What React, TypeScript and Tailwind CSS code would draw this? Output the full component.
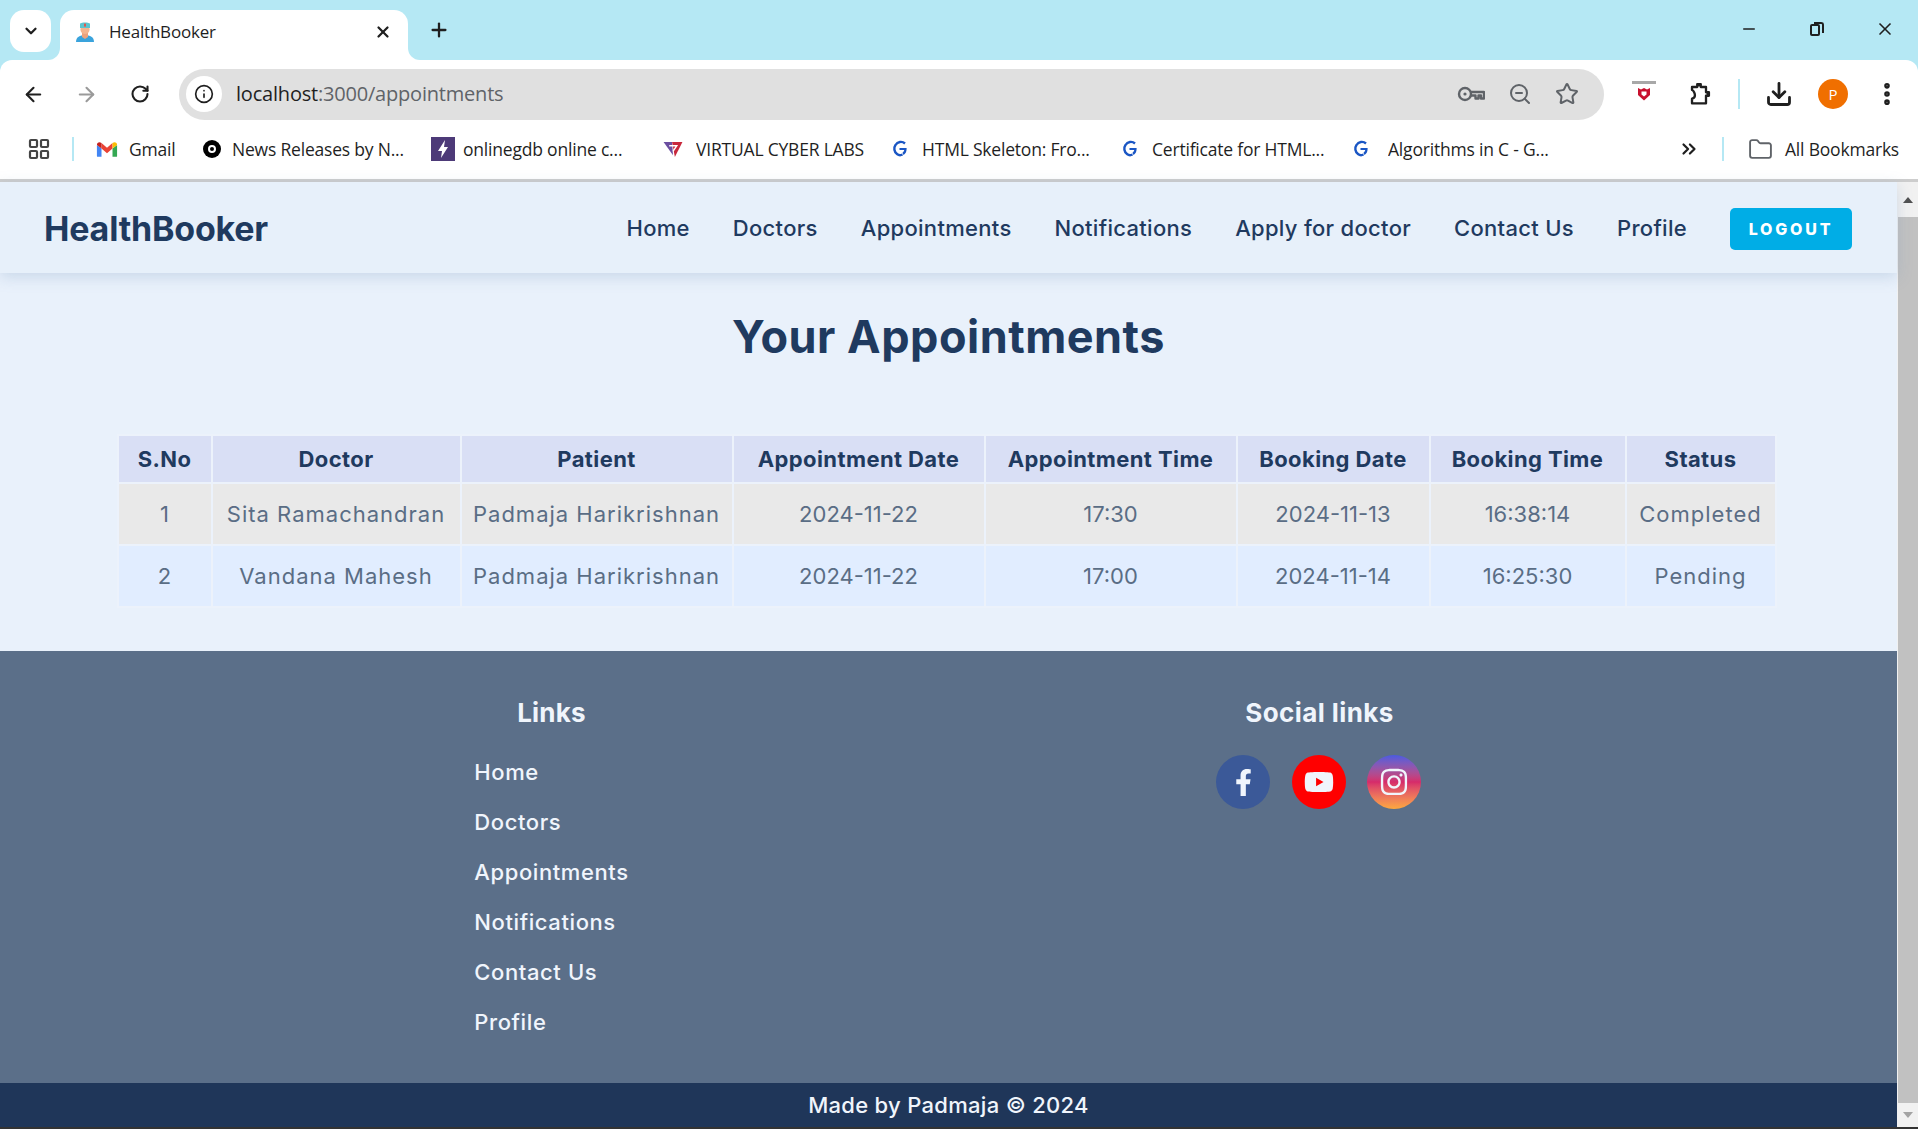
import { ArrowLeft, ArrowRight, ChevronDown, ChevronsRight, Download, EllipsisVertical, Folder, Info, LayoutGrid, Minus, Plus, RotateCw, Star, X, ZoomOut } from 'lucide-react';
import { FaFacebookF, FaInstagram, FaYoutube } from 'react-icons/fa';

const NAV = ['Home', 'Doctors', 'Appointments', 'Notifications', 'Apply for doctor', 'Contact Us', 'Profile'];
const FOOTER_LINKS = ['Home', 'Doctors', 'Appointments', 'Notifications', 'Contact Us', 'Profile'];
const COLS = [94, 249, 272, 252, 252, 193, 196, 150];
const HEAD = ['S.No', 'Doctor', 'Patient', 'Appointment Date', 'Appointment Time', 'Booking Date', 'Booking Time', 'Status'];
const ROWS = [
  { bg: 'bg-[#e9e9e9]', cells: ['1', 'Sita Ramachandran', 'Padmaja Harikrishnan', '2024-11-22', '17:30', '2024-11-13', '16:38:14', 'Completed'] },
  { bg: 'bg-[#e1edff]', cells: ['2', 'Vandana Mahesh', 'Padmaja Harikrishnan', '2024-11-22', '17:00', '2024-11-14', '16:25:30', 'Pending'] },
];
// these columns hold words, the others only digits
const WORD_COLS = [1, 2, 7];

function GLogo() {
  return (
    <svg viewBox="0 0 16 18" className="h-[18px] w-4 shrink-0" fill="none">
      <path d="M13 3.5A6.2 6.2 0 0 0 3.5 5 6.5 6.5 0 0 0 5 14c2 1.6 3.6 1.5 5.5.5" stroke="#1a56c4" strokeWidth="2.4" />
      <path d="M7.5 9h6c0 2-1 4-2.5 5" stroke="#1a56c4" strokeWidth="2.2" />
    </svg>
  );
}

function GmailLogo() {
  return (
    <svg viewBox="0 0 24 18" className="h-[17px] w-[22px] shrink-0">
      <path d="M1 17V4l5 4v9H2a1 1 0 0 1-1-1z" fill="#4285f4" />
      <path d="M23 17V4l-5 4v9h4a1 1 0 0 0 1-1z" fill="#34a853" />
      <path d="M6 8V2l6 5 6-5v6l-6 5z" fill="#ea4335" />
      <path d="M1 4c0-3 3-4 5-2v6z" fill="#c5221f" />
      <path d="M23 4c0-3-3-4-5-2v6z" fill="#fbbc04" />
    </svg>
  );
}

function TabFavicon() {
  return (
    <svg viewBox="0 0 20 22" className="h-[22px] w-5 shrink-0">
      <path d="M1 21c0-5 4-7 9-7s9 2 9 7z" fill="#3aa3dc" />
      <path d="M7 11h6v5l-3 2-3-2z" fill="#eda27c" />
      <circle cx="10" cy="8.5" r="4.6" fill="#f4b48f" />
      <path d="M5 7V2.5C7 1 13 1 15 2.5V7z" fill="#5cc5cf" />
      <rect x="9" y="2.6" width="2" height="3" fill="#e2574c" />
    </svg>
  );
}

function KeyIcon() {
  return (
    <svg viewBox="0 0 28 20" className="h-[20px] w-[28px]" fill="none" stroke="currentColor" strokeWidth="2.4">
      <circle cx="8" cy="10" r="6" />
      <circle cx="8" cy="10" r="1.6" fill="currentColor" stroke="none" />
      <path d="M14 8h13v6.5h-3V11.5h-2.5v3h-3V11.5H14" strokeLinejoin="round" />
    </svg>
  );
}

function ExtensionIcon() {
  return (
    <svg viewBox="0 0 24 24" className="size-[28px]" fill="none" stroke="#1f1f1f" strokeWidth="2" strokeLinejoin="round">
      <path d="M6 6h4.5V3.5h3V6H18v4.5h2.5v3H18V20H6v-4c1.5-.3 2.5-1.8 2.5-3S7.5 8.8 6 8.5z" />
      <rect x="11" y="3.5" width="2" height="2" fill="#1f1f1f" stroke="none" />
      <rect x="18.5" y="11" width="2.5" height="2" fill="#1f1f1f" stroke="none" />
    </svg>
  );
}

function Bookmark({ icon, label, className }: { icon: React.ReactNode; label: string; className: string }) {
  return (
    <div className={`flex shrink-0 items-center ${className}`}>
      {icon}
      <span className="truncate whitespace-nowrap">{label}</span>
    </div>
  );
}

function BrowserChrome() {
  return (
    <div className="shrink-0 bg-[#b5e8f4] font-['Open_Sans',sans-serif] text-[#1f1f1f]">
      {/* tab strip */}
      <div className="flex h-[60px] items-end">
        <div className="mb-2 ml-[10px] flex h-[42px] w-[41px] items-center justify-center rounded-[14px] bg-white">
          <ChevronDown className="size-[18px]" strokeWidth={3} />
        </div>
        <div className="relative ml-[9px] flex h-[50px] w-[348px] items-center rounded-t-[14px] bg-white pb-[7px] pl-[15px]">
          <TabFavicon />
          <span className="ml-[14px] text-[17px] tracking-[-0.2px]">HealthBooker</span>
          <X className="ml-auto mr-[16px] size-[18px]" strokeWidth={3} />
          <div className="absolute -left-3 bottom-0 size-3 bg-white">
            <div className="size-3 rounded-br-full bg-[#b5e8f4]" />
          </div>
          <div className="absolute -right-3 bottom-0 size-3 bg-white">
            <div className="size-3 rounded-bl-full bg-[#b5e8f4]" />
          </div>
        </div>
        <Plus className="mb-[19px] ml-5 size-[22px]" strokeWidth={2.5} />
        <div className="ml-auto flex items-center pb-[21px]">
          <Minus className="mr-[52px] size-[18px]" strokeWidth={2} />
          <div className="relative mr-[51px] size-[14px]">
            <div className="absolute bottom-0 left-0 h-[12px] w-[10px] rounded-[2px] border-2 border-[#1f1f1f]" />
            <div className="absolute right-0 top-0 h-[11px] w-[10px] rounded-tr-[3px] border-r-2 border-t-2 border-[#1f1f1f]" />
          </div>
          <X className="mr-[23px] size-[20px]" strokeWidth={2} />
        </div>
      </div>
      {/* toolbar */}
      <div className="flex h-[68px] items-center rounded-t-[12px] bg-white pl-[22px]">
        <ArrowLeft className="size-[23px]" strokeWidth={2.2} />
        <ArrowRight className="ml-[30px] size-[23px] text-[#9a9a9a]" strokeWidth={2.2} />
        <RotateCw className="ml-[32px] size-[20px]" strokeWidth={2.5} />
        <div className="ml-[29px] flex h-[51px] w-[1425px] items-center rounded-full bg-[#e0e0e0] pl-[7px] pr-[25px]">
          <div className="flex size-[36px] items-center justify-center rounded-full bg-white">
            <Info className="size-[20px]" strokeWidth={2} />
          </div>
          <span className="ml-[14px] text-[20px] tracking-[-0.2px]">
            localhost<span className="text-[#5f6368]">:3000/appointments</span>
          </span>
          <div className="ml-auto flex items-center gap-[23px] text-[#5f6368]">
            <KeyIcon />
            <ZoomOut className="size-[24px]" strokeWidth={2} />
            <Star className="size-[24px]" strokeWidth={2} />
          </div>
        </div>
        <div className="ml-[28px] flex h-[26px] w-[24px] flex-col items-center gap-[3px]">
          <div className="h-[3px] w-[24px] bg-[#a8a8a8]" />
          <svg viewBox="0 0 14 14" className="size-[14px]">
            <path d="M1 1l3 1.5L7 1l3 1.5L13 1v7l-6 5.5L1 8z" fill="#c8102e" />
            <path d="M4.5 4.5h5v3L7 9.5l-2.5-2z" fill="#fff" />
          </svg>
        </div>
        <div className="ml-[29px]">
          <ExtensionIcon />
        </div>
        <div className="ml-[25px] h-[30px] w-[2px] bg-[#b5e8f4]" />
        <Download className="ml-[25px] size-[28px]" strokeWidth={2.4} />
        <div className="ml-[25px] flex size-[30px] items-center justify-center rounded-full bg-[#f06f00] text-[15px] text-white">P</div>
        <EllipsisVertical className="ml-[25px] size-[28px]" strokeWidth={2.8} />
      </div>
      {/* bookmarks bar */}
      <div className="flex h-[54px] items-center border-b-[3px] border-[#cdcdcd] bg-white pb-[9px] text-[17.5px] tracking-[-0.2px]">
        <LayoutGrid className="ml-[27px] size-[24px] shrink-0 text-[#444]" strokeWidth={2.2} />
        <div className="ml-[21px] h-[24px] w-[2px] shrink-0 bg-[#b5e8f4]" />
        <Bookmark className="ml-[22px] w-[105px] gap-[11px]" icon={<GmailLogo />} label="Gmail" />
        <Bookmark
          className="ml-[2px] w-[232px] gap-[11px]"
          icon={
            <div className="flex size-[18px] shrink-0 items-center justify-center rounded-full bg-black">
              <div className="size-[8px] rounded-full border-2 border-white" />
            </div>
          }
          label="News Releases by N..."
        />
        <Bookmark
          className="ml-[-4px] w-[232px] gap-[8px]"
          icon={
            <svg viewBox="0 0 24 24" className="size-[24px] shrink-0">
              <rect width="24" height="24" fill="#4d3a78" />
              <path d="M14 3l-7 11h4l-1 7 7-11h-4z" fill="#fff" />
            </svg>
          }
          label="onlinegdb online c..."
        />
        <Bookmark
          className="ml-[0px] w-[227px] gap-[13px]"
          icon={
            <svg viewBox="0 0 20 18" className="h-[17px] w-[20px] shrink-0">
              <path d="M0 1h9l1 14z" fill="#6b4ea0" />
              <path d="M9 1h11l-8 16z" fill="#c8283c" />
              <path d="M6 5h8l-4 6" fill="none" stroke="#fff" strokeWidth="1.5" />
            </svg>
          }
          label="VIRTUAL CYBER LABS"
        />
        <Bookmark className="ml-[2px] w-[230px] gap-[14px]" icon={<GLogo />} label="HTML Skeleton: Fro..." />
        <Bookmark className="ml-[0px] w-[231px] gap-[14px]" icon={<GLogo />} label="Certificate for HTML..." />
        <Bookmark className="ml-[0px] w-[205px] gap-[19px]" icon={<GLogo />} label="Algorithms in C - G..." />
        <ChevronsRight className="ml-[120px] size-[22px] shrink-0" strokeWidth={2.4} />
        <div className="ml-[22px] h-[24px] w-[2px] shrink-0 bg-[#b5e8f4]" />
        <Folder className="ml-[24px] size-[25px] shrink-0 text-[#5f6368]" strokeWidth={1.8} />
        <span className="ml-[12px] whitespace-nowrap">All Bookmarks</span>
      </div>
    </div>
  );
}

function NavBar() {
  return (
    <header className="relative z-10 flex h-[91px] items-center justify-between bg-[#e7f0fa] pl-[44px] pr-[45px] pt-[2px] shadow-[0_4px_14px_rgba(120,150,190,0.28)]">
      <div className="text-[34px] font-bold tracking-[-0.2px] text-[#1f3a5f]">HealthBooker</div>
      <nav className="flex items-center gap-[43px] text-[22px] font-medium tracking-[0.3px] text-[#1f3a5f]">
        {NAV.map((item) => (
          <span key={item} className="whitespace-nowrap">{item}</span>
        ))}
        <button className="h-[42px] w-[122px] rounded-[5px] bg-[#00ade6] text-[16px] font-extrabold tracking-[2.8px] text-white">
          LOGOUT
        </button>
      </nav>
    </header>
  );
}

function AppointmentsTable() {
  return (
    <table className="mx-auto w-[1658px] table-fixed border-collapse text-center text-[22px]">
      <colgroup>
        {COLS.map((w, i) => (
          <col key={i} style={{ width: w }} />
        ))}
      </colgroup>
      <thead>
        <tr className="h-[48px] bg-[#d9dff5] text-[#1f3a5f]">
          {HEAD.map((h) => (
            <th key={h} className="border-2 border-[#ecf2fb] font-bold tracking-[0.4px] whitespace-nowrap">{h}</th>
          ))}
        </tr>
      </thead>
      <tbody>
        {ROWS.map((row) => (
          <tr key={row.cells[0]} className={`h-[62px] text-[#5a6d85] ${row.bg}`}>
            {row.cells.map((c, i) => (
              <td key={i} className={`border-2 border-[#ecf2fb] whitespace-nowrap ${WORD_COLS.includes(i) ? 'tracking-[1px]' : ''}`}>
                {c}
              </td>
            ))}
          </tr>
        ))}
      </tbody>
    </table>
  );
}

function Footer() {
  return (
    <footer className="flex h-[432px] justify-center bg-[#5b6f89] pr-[26px] pt-[42px] text-[#f0f5fc]">
      <div className="flex w-[768px] flex-col items-center">
        <div className="text-[26px] font-bold leading-[40px] tracking-[0.2px]">Links</div>
        <ul className="mt-[24px] flex flex-col gap-[20px] text-[22px] font-medium leading-[30px] tracking-[0.6px]">
          {FOOTER_LINKS.map((l) => (
            <li key={l}>{l}</li>
          ))}
        </ul>
      </div>
      <div className="flex w-[768px] flex-col items-center">
        <div className="text-[26px] font-bold leading-[40px] tracking-[0.4px]">Social links</div>
        <div className="mr-[2px] mt-[22px] flex gap-[21.5px]">
          <div className="flex size-[54px] items-center justify-center rounded-full bg-[#3b5998]">
            <FaFacebookF className="size-[27px]" />
          </div>
          <div className="flex size-[54px] items-center justify-center rounded-full bg-[#ff0000]">
            <FaYoutube className="size-[30px]" />
          </div>
          <div className="flex size-[54px] items-center justify-center rounded-full bg-gradient-to-b from-[#4a5ae0] via-[#d62a6a] to-[#fda83c]">
            <FaInstagram className="size-[30px]" />
          </div>
        </div>
      </div>
    </footer>
  );
}

function Scrollbar() {
  return (
    <div className="flex w-[21px] shrink-0 flex-col items-center bg-[#f1f1f1]">
      <div className="flex h-[35px] w-full items-center justify-center">
        <div className="h-0 w-0 border-x-[5px] border-b-[6px] border-x-transparent border-b-[#505050]" />
      </div>
      <div className="h-[886px] w-[20px] self-end bg-[#c1c1c1]" />
      <div className="flex h-[24px] w-full items-center justify-center">
        <div className="h-0 w-0 border-x-[5px] border-t-[6px] border-x-transparent border-t-[#a3a3a3]" />
      </div>
    </div>
  );
}

export default function App() {
  return (
    <div className="flex h-[1129px] w-[1918px] flex-col overflow-hidden bg-[#333] font-['Inter',sans-serif]">
      <BrowserChrome />
      <div className="flex h-[945px] shrink-0">
        <div className="flex w-[1897px] flex-col">
          <NavBar />
          <main className="flex h-[378px] flex-col bg-[#e9f1fb] pt-[32px]">
            <h1 className="text-center text-[45px] leading-[64px] font-bold tracking-[0.5px] text-[#1f3a5f]">Your Appointments</h1>
            <div className="mt-[65px] pr-[4px]">
              <AppointmentsTable />
            </div>
          </main>
          <Footer />
          <div className="flex h-[44px] items-center justify-center bg-[#1f3659] text-[22px] font-medium tracking-[0.3px] text-[#f0f5fc]">
            Made by Padmaja © 2024
          </div>
        </div>
        <Scrollbar />
      </div>
    </div>
  );
}
